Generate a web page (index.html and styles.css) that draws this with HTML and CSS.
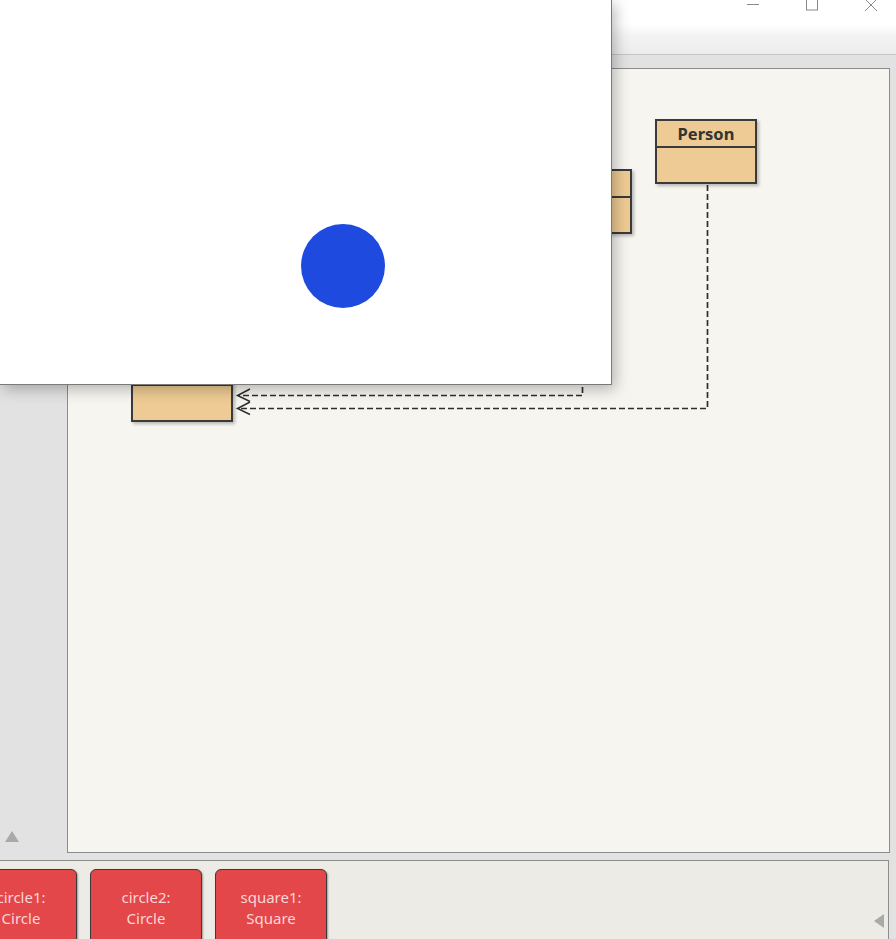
FILE: index.html
```html
<!DOCTYPE html>
<html>
<head>
<meta charset="utf-8">
<link rel="stylesheet" href="styles.css">
</head>
<body>
<div class="bluej">
  <div class="titlebar">
    <div class="appicon"></div>
    <div class="controls">
      <svg class="ctl" width="14" height="12" viewBox="0 0 14 12"><line x1="1" y1="4.5" x2="13" y2="4.5" stroke="#8a8a8a" stroke-width="1"/></svg>
      <svg class="ctl" width="14" height="12" viewBox="0 0 14 12"><rect x="1.5" y="-2" width="11" height="12" fill="none" stroke="#8a8a8a" stroke-width="1"/></svg>
      <svg class="ctl" width="14" height="12" viewBox="0 0 14 12"><path d="M1 -1 L13 11 M13 -1 L1 11" stroke="#8a8a8a" stroke-width="1"/></svg>
    </div>
  </div>
  <div class="toolbar"></div>
  <div class="main">
    <div class="sidepanel">
      <div class="tri-up"></div>
    </div>
    <div class="diagram">
      <svg class="arrows" width="823" height="785" viewBox="67 68 823 785">
        <g fill="none" stroke="#2e2e2e" stroke-width="1.7" stroke-dasharray="6 3">
          <path d="M707.5 185 V408.5 H238"/>
          <path d="M582.5 234 V395.5 H238"/>
        </g>
        <g fill="none" stroke="#2e2e2e" stroke-width="1.5">
          <path d="M250 389 L237.5 395.5 L250 401.5"/>
          <path d="M250 402 L237.5 408.5 L250 414.5"/>
        </g>
      </svg>
      <div class="cls cls-person">
        <div class="cls-head">Person</div>
        <div class="cls-body"></div>
      </div>
      <div class="cls cls-square">
        <div class="cls-head">Square</div>
        <div class="cls-body"></div>
      </div>
      <div class="cls cls-canvas">
        <div class="cls-head">Canvas</div>
        <div class="cls-body"></div>
      </div>
    </div>
  </div>
  <div class="bench">
    <div class="objects">
      <div class="obj">circle1:<br>Circle</div>
      <div class="obj">circle2:<br>Circle</div>
      <div class="obj">square1:<br>Square</div>
    </div>
    <div class="tri-left"></div>
  </div>
</div>

<div class="shapes-window">
  <div class="blue-dot"></div>
</div>
</body>
</html>
```

FILE: styles.css
```css
html, body {
  margin: 0;
  padding: 0;
}
body {
  width: 896px;
  height: 939px;
  overflow: hidden;
  position: relative;
  font-family: "Noto Sans", "Open Sans", sans-serif;
  background: #e2e2e2;
}
.bluej {
  width: 896px;
  height: 939px;
  display: flex;
  flex-direction: column;
}
.titlebar {
  height: 24px;
  background: #ffffff;
  display: flex;
  justify-content: space-between;
  flex: none;
}
.appicon {
  width: 16px;
  height: 2px;
  background: linear-gradient(90deg, #7a7f88, #9aa0aa, #6d7380);
}
.controls {
  display: flex;
  gap: 45px;
  padding-right: 18px;
  align-items: flex-start;
}
.ctl {
  display: block;
}
.toolbar {
  height: 30px;
  flex: none;
  background: linear-gradient(180deg, #ffffff 0%, #f3f3f3 40%, #ececec 100%);
  border-bottom: 1px solid #c6c6c6;
}
.main {
  flex: none;
  height: 805px;
  display: flex;
  background: #e2e2e2;
}
.sidepanel {
  width: 67px;
  flex: none;
  position: relative;
  display: flex;
  align-items: flex-end;
  padding-left: 5px;
  padding-bottom: 18px;
  box-sizing: border-box;
}
.tri-up {
  width: 0;
  height: 0;
  border-left: 7px solid transparent;
  border-right: 7px solid transparent;
  border-bottom: 11px solid #a9a9a9;
}
.diagram {
  width: 821px;
  height: 783px;
  margin-top: 13px;
  border: 1px solid #8c8c8c;
  background: #f6f5f0;
  position: relative;
  overflow: hidden;
}
.arrows {
  position: absolute;
  left: -1px;
  top: -1px;
}
.cls {
  position: absolute;
  width: 98px;
  height: 61px;
  border: 2px solid #3a3a3a;
  background: #eecb94;
  box-shadow: 2px 2px 3px rgba(0,0,0,0.25);
  display: flex;
  flex-direction: column;
}
.cls-head {
  height: 25px;
  border-bottom: 2px solid #3a3a3a;
  font-weight: bold;
  font-size: 16.5px;
  color: #333;
  text-align: center;
  line-height: 25px;
}
.cls-body {
  flex: 1;
}
.cls-person {
  left: 587px;
  top: 50px;
}
.cls-square {
  left: 462px;
  top: 100px;
}
.cls-canvas {
  left: 63px;
  top: 288px;
}
.bench {
  flex: 1;
  border-top: 1px solid #8c8c8c;
  margin-top: 0;
  width: 889px;
  border-right: 1px solid #8c8c8c;
  background: #edebe6;
  position: relative;
  overflow: hidden;
  box-sizing: border-box;
  padding-top: 8px;
}
.objects {
  display: flex;
  gap: 13px;
  margin-left: -35px;
}
.obj {
  width: 112px;
  height: 80px;
  flex: none;
  background: #e3474a;
  border: 1px solid #3b3b3b;
  border-radius: 6px;
  box-shadow: 1px 1px 2px rgba(0,0,0,0.35);
  color: #fbd6d6;
  font-size: 15px;
  line-height: 21px;
  text-align: center;
  padding-top: 17px;
  box-sizing: border-box;
}
.tri-left {
  position: absolute;
  right: 4px;
  bottom: 11px;
  width: 0;
  height: 0;
  border-top: 7px solid transparent;
  border-bottom: 7px solid transparent;
  border-right: 10px solid #a9a9a9;
}
.shapes-window {
  position: absolute;
  left: 0;
  top: 0;
  width: 612px;
  height: 385px;
  box-sizing: border-box;
  background: #ffffff;
  border-right: 1px solid #7a7a7a;
  border-bottom: 1px solid #7a7a7a;
  box-shadow: 3px 4px 14px rgba(0,0,0,0.28);
}
.blue-dot {
  position: absolute;
  left: 301px;
  top: 224px;
  width: 84px;
  height: 84px;
  border-radius: 50%;
  background: #1f4ae0;
}
```
